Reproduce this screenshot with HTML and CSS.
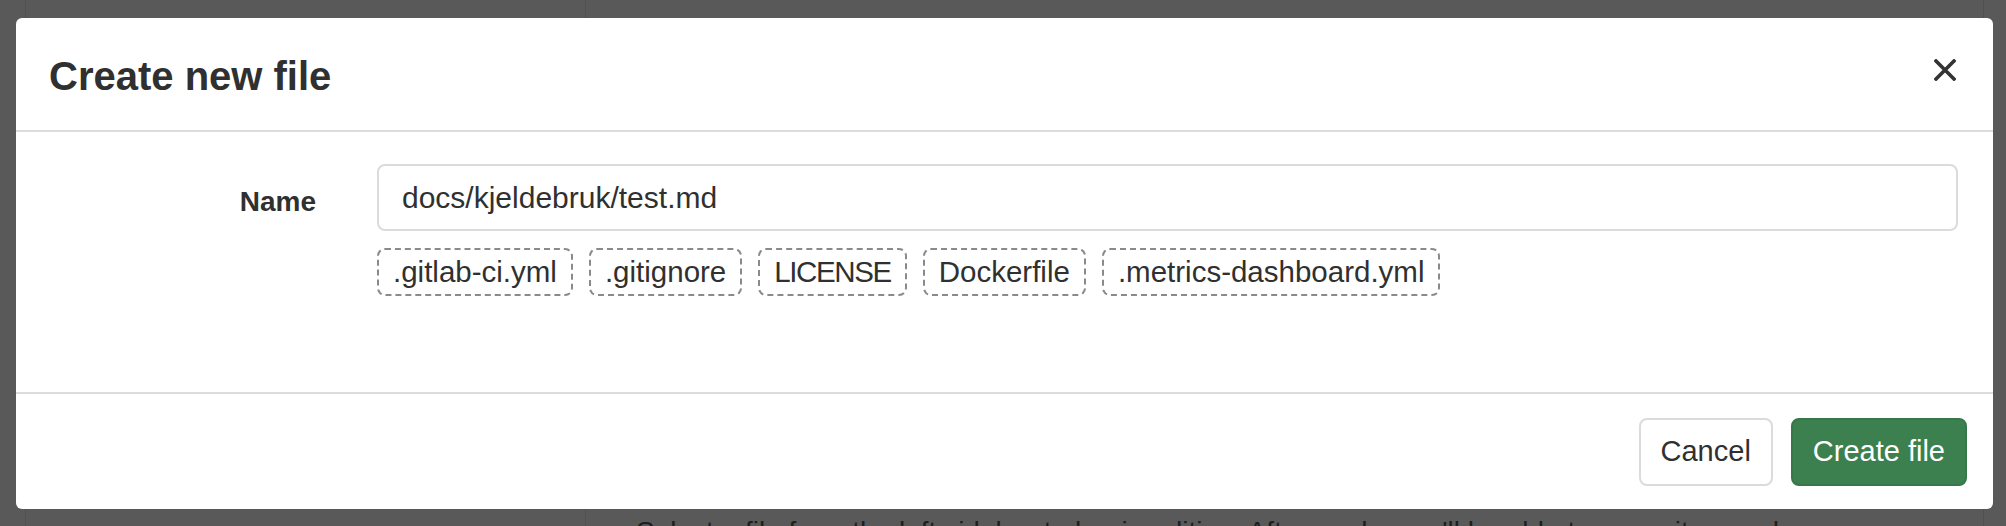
FILE: index.html
```html
<!DOCTYPE html>
<html lang="en">
<head>
<meta charset="utf-8">
<title>Create new file</title>
<link rel="stylesheet" href="styles.css">
</head>
<body>
<div class="page">
  <div class="col col-nav"></div>
  <div class="col col-tree"></div>
  <div class="col col-main">
    <p class="empty-text">Select a file from the left sidebar to begin editing. Afterwards, you'll be able to commit your changes.</p>
  </div>
  <div class="col col-right"></div>
</div>

<div class="modal">
  <div class="modal-header">
    <h4 class="modal-title">Create new file</h4>
    <button class="close" type="button" aria-label="Close">
      <svg width="22" height="22" viewBox="0 0 22 22"><path d="M2 2 L20 20 M20 2 L2 20" stroke="#333" stroke-width="3.6" stroke-linecap="square" fill="none"/></svg>
    </button>
  </div>
  <div class="modal-body">
    <div class="form-row">
      <label class="label">Name</label>
      <div class="field">
        <input class="input" type="text" value="docs/kjeldebruk/test.md">
        <div class="templates">
          <button class="chip" type="button">.gitlab-ci.yml</button>
          <button class="chip" type="button">.gitignore</button>
          <button class="chip chip-caps" type="button">LICENSE</button>
          <button class="chip" type="button">Dockerfile</button>
          <button class="chip" type="button">.metrics-dashboard.yml</button>
        </div>
      </div>
    </div>
  </div>
  <div class="modal-footer">
    <button class="btn btn-default" type="button">Cancel</button>
    <button class="btn btn-success" type="button">Create file</button>
  </div>
</div>
</body>
</html>
```
FILE: styles.css
```css
* { box-sizing: border-box; }

html, body {
  margin: 0;
  padding: 0;
  height: 100%;
  overflow: hidden;
}

body {
  background: #595959;
  font-family: "Liberation Sans", Arial, sans-serif;
  color: #303030;
}

.page {
  display: flex;
  height: 526px;
}

.col { height: 100%; }
.col-nav { width: 26px; border-right: 1px solid #515151; }
.col-tree { width: 560px; border-right: 1px solid #515151; }
.col-main { flex: 1; padding: 512px 0 0 50px; overflow: hidden; }
.col-right { width: 23px; border-left: 1px solid #4f4f4f; }

.empty-text {
  margin: 0;
  font-size: 28px;
  line-height: 40px;
  color: #1e1e1e;
  white-space: nowrap;
}

.modal {
  position: absolute;
  left: 16px;
  top: 18px;
  width: 1977px;
  height: 491px;
  background: #fff;
  border-radius: 6px;
  display: flex;
  flex-direction: column;
}

.modal-header {
  height: 114px;
  display: flex;
  align-items: center;
  justify-content: space-between;
  padding: 0 37px 0 33px;
  border-bottom: 2px solid #dcdcdc;
}

.modal-title {
  margin: 4px 0 0;
  font-size: 40px;
  line-height: 1;
  font-weight: 700;
  color: #303030;
}

.close {
  border: 0;
  background: none;
  padding: 0;
  margin-top: -8px;
  width: 22px;
  height: 22px;
  display: flex;
}

.modal-body {
  flex: 1;
  padding: 32px 35px 0 32px;
}

.form-row {
  display: grid;
  grid-template-columns: 268px 1fr;
  column-gap: 61px;
}

.label {
  text-align: right;
  font-size: 28px;
  font-weight: 700;
  line-height: 28px;
  padding-top: 24px;
  color: #303030;
}

.input {
  display: block;
  width: 100%;
  height: 67px;
  border: 2px solid #dbdbdb;
  border-radius: 8px;
  padding: 0 23px;
  font-family: inherit;
  font-size: 30px;
  color: #303030;
  background: #fff;
  outline: none;
}

.templates {
  display: flex;
  gap: 16px;
  margin-top: 17px;
}

.chip {
  height: 48px;
  padding: 0 14px;
  border: 2px dashed #8a8a8a;
  border-radius: 8px;
  background: #fff;
  font-family: inherit;
  font-size: 29.5px;
  color: #303030;
  line-height: 1;
  white-space: nowrap;
}

.chip-caps { letter-spacing: -1.4px; }

.modal-footer {
  height: 117px;
  border-top: 2px solid #dcdcdc;
  display: flex;
  align-items: center;
  justify-content: flex-end;
  gap: 18px;
  padding: 0 26px 0 0;
}

.btn {
  height: 68px;
  border-radius: 8px;
  font-family: inherit;
  font-size: 29px;
  padding: 0 20px;
  line-height: 1;
  white-space: nowrap;
}

.btn-default {
  background: #fff;
  border: 2px solid #dbdbdb;
  color: #303030;
  min-width: 131px;
}

.btn-success {
  background: #3d8050;
  border: 2px solid #37784a;
  color: #fff;
  min-width: 175px;
}
```
